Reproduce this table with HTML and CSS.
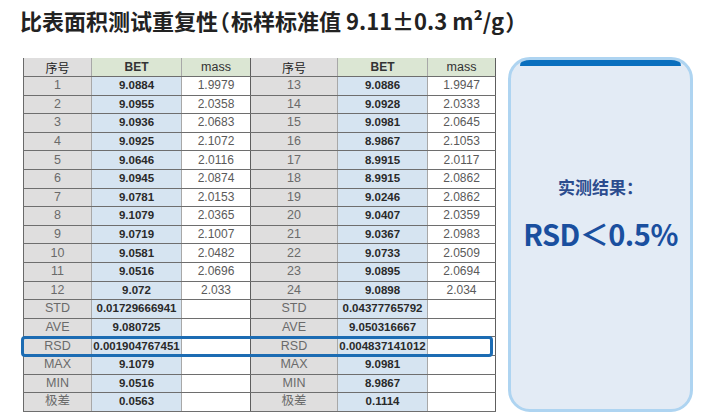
FILE: index.html
```html
<!DOCTYPE html>
<html lang="zh-CN">
<head>
<meta charset="utf-8">
<title>比表面积测试重复性</title>
<link rel="stylesheet" href="styles.css">
</head>
<body>
<h1 class="title">比表面积测试重复性<span class="paren">（</span>标样标准值 9.11±0.3 m²/g<span class="paren">）</span></h1>
<div class="main">
  <div class="table-wrap">
    <table class="data">
      <colgroup>
        <col class="c-idx1"><col class="c-bet"><col class="c-mass1"><col class="c-idx2"><col class="c-bet"><col class="c-mass2">
      </colgroup>
      <thead>
        <tr><th class="idx">序号</th><th class="hbet">BET</th><th class="hmass sep">mass</th><th class="idx">序号</th><th class="hbet">BET</th><th class="hmass sep">mass</th></tr>
      </thead>
      <tbody>
        <tr><td class="idx">1</td><td class="bet">9.0884</td><td class="mass sep">1.9979</td><td class="idx">13</td><td class="bet">9.0886</td><td class="mass sep">1.9947</td></tr>
        <tr><td class="idx">2</td><td class="bet">9.0955</td><td class="mass sep">2.0358</td><td class="idx">14</td><td class="bet">9.0928</td><td class="mass sep">2.0333</td></tr>
        <tr><td class="idx">3</td><td class="bet">9.0936</td><td class="mass sep">2.0683</td><td class="idx">15</td><td class="bet">9.0981</td><td class="mass sep">2.0645</td></tr>
        <tr><td class="idx">4</td><td class="bet">9.0925</td><td class="mass sep">2.1072</td><td class="idx">16</td><td class="bet">8.9867</td><td class="mass sep">2.1053</td></tr>
        <tr><td class="idx">5</td><td class="bet">9.0646</td><td class="mass sep">2.0116</td><td class="idx">17</td><td class="bet">8.9915</td><td class="mass sep">2.0117</td></tr>
        <tr><td class="idx">6</td><td class="bet">9.0945</td><td class="mass sep">2.0874</td><td class="idx">18</td><td class="bet">8.9915</td><td class="mass sep">2.0862</td></tr>
        <tr><td class="idx">7</td><td class="bet">9.0781</td><td class="mass sep">2.0153</td><td class="idx">19</td><td class="bet">9.0246</td><td class="mass sep">2.0862</td></tr>
        <tr><td class="idx">8</td><td class="bet">9.1079</td><td class="mass sep">2.0365</td><td class="idx">20</td><td class="bet">9.0407</td><td class="mass sep">2.0359</td></tr>
        <tr><td class="idx">9</td><td class="bet">9.0719</td><td class="mass sep">2.1007</td><td class="idx">21</td><td class="bet">9.0367</td><td class="mass sep">2.0983</td></tr>
        <tr><td class="idx">10</td><td class="bet">9.0581</td><td class="mass sep">2.0482</td><td class="idx">22</td><td class="bet">9.0733</td><td class="mass sep">2.0509</td></tr>
        <tr><td class="idx">11</td><td class="bet">9.0516</td><td class="mass sep">2.0696</td><td class="idx">23</td><td class="bet">9.0895</td><td class="mass sep">2.0694</td></tr>
        <tr><td class="idx">12</td><td class="bet">9.072</td><td class="mass sep">2.033</td><td class="idx">24</td><td class="bet">9.0898</td><td class="mass sep">2.034</td></tr>
        <tr><td class="idx">STD</td><td class="bet">0.01729666941</td><td class="mass sep"></td><td class="idx">STD</td><td class="bet">0.04377765792</td><td class="mass sep"></td></tr>
        <tr><td class="idx">AVE</td><td class="bet">9.080725</td><td class="mass sep"></td><td class="idx">AVE</td><td class="bet">9.050316667</td><td class="mass sep"></td></tr>
        <tr><td class="idx">RSD</td><td class="bet">0.001904767451</td><td class="mass sep"></td><td class="idx">RSD</td><td class="bet">0.004837141012</td><td class="mass sep"></td></tr>
        <tr><td class="idx">MAX</td><td class="bet">9.1079</td><td class="mass sep"></td><td class="idx">MAX</td><td class="bet">9.0981</td><td class="mass sep"></td></tr>
        <tr><td class="idx">MIN</td><td class="bet">9.0516</td><td class="mass sep"></td><td class="idx">MIN</td><td class="bet">8.9867</td><td class="mass sep"></td></tr>
        <tr><td class="idx">极差</td><td class="bet">0.0563</td><td class="mass sep"></td><td class="idx">极差</td><td class="bet">0.1114</td><td class="mass sep"></td></tr>
      </tbody>
    </table>
    <div class="rsd-mark"></div>
  </div>
  <div class="result">
    <div class="result-label">实测结果：</div>
    <div class="result-value">RSD＜0.5%</div>
  </div>
</div>
</body>
</html>
```
FILE: styles.css
```css
html, body {
  margin: 0;
  padding: 0;
  background: #ffffff;
}

body {
  width: 714px;
  height: 415px;
  overflow: hidden;
  font-family: "Noto Sans CJK SC", "Noto Sans", sans-serif;
}

.title {
  margin: 0 0 22px 0;
  padding: 6px 0 0 20px;
  font-size: 22px;
  line-height: 29px;
  font-weight: 700;
  color: #222222;
  white-space: nowrap;
}

.title .paren {
  font-feature-settings: "halt";
  display: inline-block;
  margin: 0 1px;
}

.main {
  display: flex;
  align-items: flex-start;
  padding-left: 23px;
  gap: 12px;
}

.table-wrap {
  position: relative;
  margin-top: 1px;
}

.data {
  border-collapse: collapse;
  table-layout: fixed;
  width: 472px;
  font-family: "Liberation Sans", "Noto Sans CJK SC", sans-serif;
  font-size: 12px;
  border-left: 1px solid #6a6a6a;
}

.c-idx1 { width: 68px; }
.c-bet { width: 90px; }
.c-mass1 { width: 69px; }
.c-idx2 { width: 87px; }
.c-mass2 { width: 68px; }

.data th,
.data td {
  padding: 0;
  text-align: center;
  white-space: nowrap;
  overflow: hidden;
  border-bottom: 1px solid #6e6e6e;
  border-right: 1px solid #a8a8a8;
  line-height: 17px;
}

.data th {
  height: 18px;
  font-weight: 400;
  color: #222;
}

.data td {
  height: 17.6px;
}

.data .sep {
  border-right: 1px solid #5e5e5e;
}

.data th.idx {
  font-family: "Noto Sans CJK SC", sans-serif;
  font-size: 12px;
  background: #dfdede;
  color: #222;
}

.data .hbet {
  background: #dbe6d3;
  font-weight: 700;
  color: #333;
}

.data .hmass {
  background: #dbe6d3;
  color: #333;
  font-size: 12.5px;
}

.data td.idx {
  background: #dfdede;
  color: #6a6a6a;
  font-size: 12.5px;
}

.data td.bet {
  background: #d6e4f1;
  font-weight: 700;
  color: #2a2a2a;
  font-size: 11.5px;
}

.data td.mass {
  background: #ffffff;
  color: #5a5a5a;
}

.rsd-mark {
  position: absolute;
  left: -2px;
  top: 278px;
  width: 466px;
  height: 15px;
  border: 3px solid #1c6cb3;
  border-radius: 4px;
  pointer-events: none;
}

.result {
  position: relative;
  box-sizing: border-box;
  width: 185px;
  height: 355px;
  border: 3px solid #aed4f1;
  border-radius: 22px;
  background: #e3ebf5;
  display: flex;
  flex-direction: column;
  align-items: center;
  padding-top: 115px;
  overflow: hidden;
}

.result::before {
  content: "";
  position: absolute;
  top: -2px;
  left: 9px;
  right: 9px;
  height: 8px;
  background: #0a6fbe;
  border-radius: 12px 12px 0 0;
}

.result-label {
  font-size: 17px;
  line-height: 24px;
  font-weight: 700;
  color: #2c4c8e;
}

.result-value {
  margin-top: 16px;
  font-size: 29px;
  line-height: 36px;
  font-weight: 700;
  color: #1a4f9f;
  letter-spacing: -0.5px;
}
```
